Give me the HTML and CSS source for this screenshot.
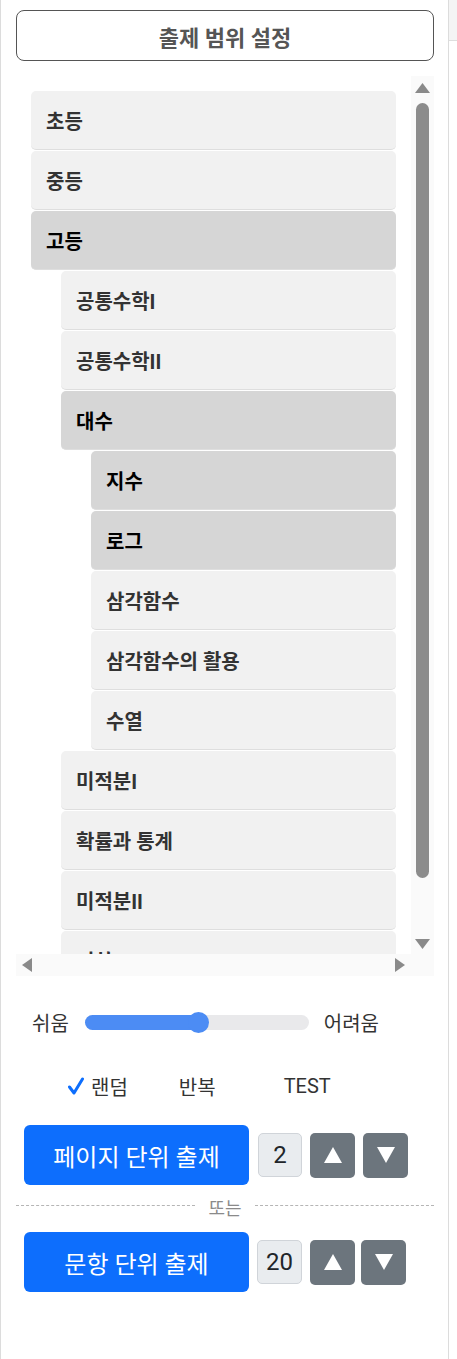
FILE: index.html
```html
<!DOCTYPE html>
<html lang="ko">
<head>
<meta charset="utf-8">
<title>출제 범위 설정</title>
<link rel="stylesheet" href="styles.css">
</head>
<body>
<div class="page">
  <div class="panel">
    <div class="title-box">출제 범위 설정</div>
    <div class="tree">
      <div class="viewport">
        <div class="node lv0">초등</div>
        <div class="node lv0">중등</div>
        <div class="node lv0 sel">고등</div>
        <div class="node lv1">공통수학I</div>
        <div class="node lv1">공통수학II</div>
        <div class="node lv1 sel">대수</div>
        <div class="node lv2 sel">지수</div>
        <div class="node lv2 sel">로그</div>
        <div class="node lv2">삼각함수</div>
        <div class="node lv2">삼각함수의 활용</div>
        <div class="node lv2">수열</div>
        <div class="node lv1">미적분I</div>
        <div class="node lv1">확률과 통계</div>
        <div class="node lv1">미적분II</div>
        <div class="node lv1">기하</div>
      </div>
      <div class="vbar">
        <svg class="arr-up" width="15" height="10" viewBox="0 0 15 10"><polygon points="7.5,0 15,10 0,10" fill="#8a8a8a"/></svg>
        <div class="vthumb"></div>
        <svg class="arr-down" width="15" height="10" viewBox="0 0 15 10"><polygon points="0,0 15,0 7.5,10" fill="#8a8a8a"/></svg>
      </div>
      <div class="hbar">
        <svg width="10" height="14" viewBox="0 0 10 14"><polygon points="10,0 10,14 0,7" fill="#8a8a8a"/></svg>
        <svg width="10" height="14" viewBox="0 0 10 14"><polygon points="0,0 10,7 0,14" fill="#8a8a8a"/></svg>
      </div>
      <div class="corner"></div>
    </div>

    <div class="level-row">
      <span class="lvl-label">쉬움</span>
      <div class="track">
        <div class="fill" style="width: 113px"></div>
        <div class="thumb" style="left: 113px"></div>
      </div>
      <span class="lvl-label">어려움</span>
    </div>

    <div class="opts">
      <span class="opt opt-random">
        <svg class="check" width="16" height="18" viewBox="0 0 16 18"><path d="M1.5 10 L6 16 L14.5 2" fill="none" stroke="#0d6efd" stroke-width="3" stroke-linecap="round" stroke-linejoin="round"/></svg>
        랜덤
      </span>
      <span class="opt opt-repeat">반복</span>
      <span class="opt opt-test">TEST</span>
    </div>

    <div class="act-row">
      <button class="btn-main">페이지 단위 출제</button>
      <div class="num">2</div>
      <button class="btn-step"><svg width="18" height="16" viewBox="0 0 18 16"><polygon points="9,0 18,16 0,16" fill="#fff"/></svg></button>
      <button class="btn-step"><svg width="18" height="16" viewBox="0 0 18 16"><polygon points="0,0 18,0 9,16" fill="#fff"/></svg></button>
    </div>

    <div class="divider">
      <span class="dash"></span>
      <span class="or">또는</span>
      <span class="dash"></span>
    </div>

    <div class="act-row act-row2">
      <button class="btn-main">문항 단위 출제</button>
      <div class="num num2">20</div>
      <button class="btn-step"><svg width="18" height="16" viewBox="0 0 18 16"><polygon points="9,0 18,16 0,16" fill="#fff"/></svg></button>
      <button class="btn-step step-tight"><svg width="18" height="16" viewBox="0 0 18 16"><polygon points="0,0 18,0 9,16" fill="#fff"/></svg></button>
    </div>
  </div>
  <div class="side">
    <div class="side-top"></div>
  </div>
</div>
</body>
</html>
```

FILE: styles.css
```css
* { box-sizing: border-box; }
html, body { margin: 0; padding: 0; background: #fff; }
body {
  font-family: Roboto, "Noto Sans CJK KR", sans-serif;
  color: #333;
}
.page { display: flex; min-height: 1359px; }
.panel {
  width: 449px;
  flex: none;
  border-left: 1px solid #dcdcdc;
  border-right: 1px solid #dcdcdc;
  padding: 10px 14px 0 15px;
}
.side { flex: 1; }
.side-top {
  height: 41px;
  background: #f4f4f4;
  border-bottom: 1px solid #dedede;
}
.title-box {
  height: 51px;
  border: 1px solid #555;
  border-radius: 8px;
  display: flex;
  align-items: center;
  justify-content: center;
  font-size: 22px;
  font-weight: 700;
  color: #555;
}

/* tree with drawn scrollbars */
.tree {
  margin-top: 15px;
  height: 900px;
  display: grid;
  grid-template-columns: 1fr 23px;
  grid-template-rows: 1fr 22px;
}
.viewport {
  overflow: hidden;
  padding: 15px 15px 0 15px;
}
.vbar {
  background: #fafafa;
  display: flex;
  flex-direction: column;
  align-items: center;
}
.arr-up { margin-top: 7px; flex: none; }
.vthumb {
  margin-top: 10px;
  width: 13px;
  height: 775px;
  border-radius: 7px;
  background: #8c8c8c;
  flex: none;
}
.arr-down { margin-top: auto; margin-bottom: 5px; flex: none; }
.hbar {
  background: #fafafa;
  display: flex;
  align-items: center;
  justify-content: space-between;
  padding: 0 6px;
}
.corner { background: #fafafa; }

.node {
  height: 59px;
  margin-bottom: 1px;
  border-bottom: 1px solid #dedede;
  border-radius: 5px;
  background: #f1f1f1;
  display: flex;
  align-items: center;
  padding-left: 15px;
  font-size: 20px;
  font-weight: 700;
  color: #333;
  white-space: nowrap;
}
.node.sel { background: #d6d6d6; color: #000; }
.lv1 { margin-left: 30px; }
.lv2 { margin-left: 60px; }

.level-row {
  display: flex;
  align-items: center;
  height: 24px;
  margin-top: 34px;
  padding-left: 16px;
}
.lvl-label { font-size: 20px; color: #333; }
.track {
  position: relative;
  width: 224px;
  height: 15px;
  border-radius: 8px;
  background: #e9e9eb;
  margin: 0 15px 0 16px;
}
.fill {
  height: 15px;
  border-radius: 8px;
  background: #4c8cf4;
}
.thumb {
  position: absolute;
  top: -3px;
  width: 21px;
  height: 21px;
  margin-left: -10px;
  border-radius: 50%;
  background: #4c8cf4;
}

.opts {
  display: flex;
  align-items: center;
  margin-top: 40px;
  height: 24px;
  font-size: 20px;
  color: #333;
}
.opt { display: flex; align-items: center; }
.opt-random { margin-left: 52px; }
.check { margin-right: 7px; }
.opt-repeat { margin-left: 51px; }
.opt-test { margin-left: 68px; }

.act-row {
  display: flex;
  align-items: center;
  margin-top: 27px;
  padding-left: 8px;
}
.btn-main {
  width: 225px;
  height: 60px;
  border: none;
  border-radius: 6px;
  background: #0d6efd;
  color: #fff;
  font-family: Roboto, "Noto Sans CJK KR", sans-serif;
  font-size: 24px;
  padding: 0;
}
.num {
  width: 44px;
  height: 44px;
  margin-left: 9px;
  border: 1px solid #d0d4d9;
  border-radius: 5px;
  background: #e9ecef;
  display: flex;
  align-items: center;
  justify-content: center;
  font-size: 24px;
  color: #212529;
}
.num2 { width: 45px; margin-left: 8px; }
.btn-step {
  width: 45px;
  height: 45px;
  margin-left: 8px;
  border: none;
  border-radius: 5px;
  background: #6c757d;
  display: flex;
  align-items: center;
  justify-content: center;
  padding: 0;
}
.step-tight { margin-left: 6px; }
.divider {
  display: flex;
  align-items: center;
  margin-top: 14px;
  height: 16px;
}
.dash { flex: 1; border-top: 1px dashed #b5b5b5; margin-top: -4px; }
.or { font-size: 18px; color: #8a8a8a; margin: 0 13px; }
.act-row2 { margin-top: 17px; }
```
